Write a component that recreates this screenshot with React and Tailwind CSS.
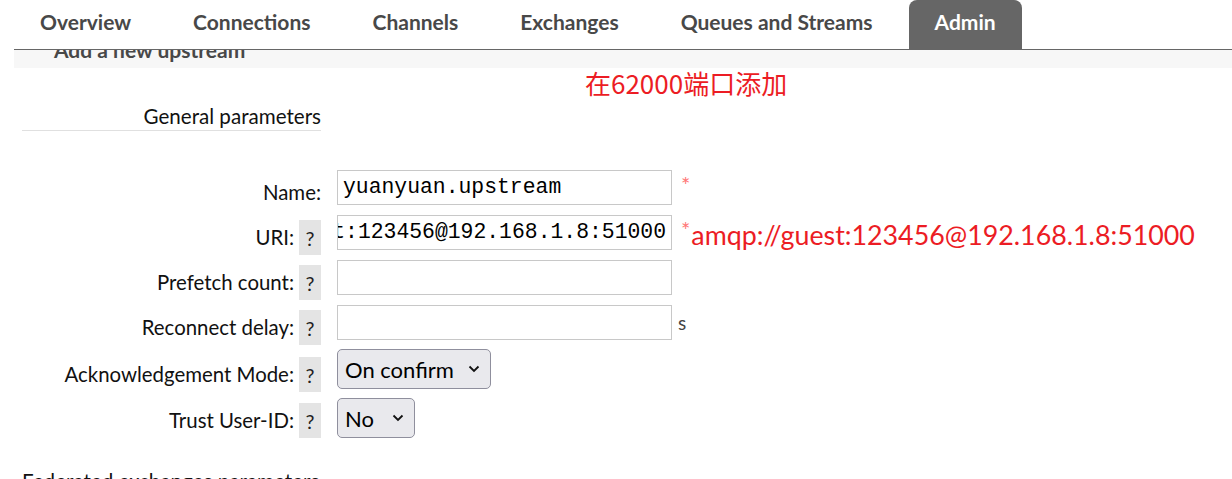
import React from 'react';

const tabs = ['Overview', 'Connections', 'Channels', 'Exchanges', 'Queues and Streams', 'Admin'];

const Help = () => (
  <span className="ml-[5px] flex h-[35px] w-[22px] items-center justify-center bg-[#e4e4e4] text-[20px] text-[#222]">?</span>
);

const Row = ({ label, help = true, offset = 'mt-[5px]', children, h = 'h-[45px]' }) => (
  <div className={`flex items-start ${h}`}>
    <div className={`flex w-[299px] items-center justify-end ${offset} h-[35px]`}>
      <span className="text-[20.4px] text-[#111]">{label}</span>
      {help && <Help />}
    </div>
    <div className="ml-4 flex items-start">{children}</div>
  </div>
);

const Input = ({ value = '', mono, alignEnd }) => (
  <div className={`flex h-[35px] w-[335px] items-center overflow-hidden border border-[#c8c8c8] bg-white px-[5px] text-[21.4px] text-black ${alignEnd ? 'justify-end' : ''} ${mono ? "font-['Liberation_Mono',monospace]" : ''}`}>
    <span className="whitespace-nowrap">{value}</span>
  </div>
);

const Select = ({ value, w }) => (
  <div className={`flex h-[40px] ${w} items-center justify-between rounded-[5px] border border-[#8f8f9d] bg-[#e9e9ed] pl-[7px] pr-[10px] text-[22px] text-black`}>
    <span>{value}</span>
    <svg width="12" height="8" viewBox="0 0 12 8" fill="none" stroke="#111" strokeWidth="1.8">
      <path d="M1.5 1.5 L6 6 L10.5 1.5" />
    </svg>
  </div>
);

const Star = () => (
  <span className="ml-[9px] mt-[4px] text-[22px] leading-[22px] text-[#f77]">*</span>
);

export default function App() {
  return (
    <div className="h-[479px] overflow-hidden bg-white font-['Lato','Noto_Sans',sans-serif]">
      {/* Tab bar */}
      <div className="ml-[14px] flex h-[50px] items-end gap-[10px] border-b border-[#666]">
        {tabs.map(t => (
          <div key={t}
            className={`flex h-[49px] items-center px-[26px] pb-[5px] text-[21px] font-bold ${t === 'Admin' ? 'rounded-t-[8px] bg-[#666] text-white' : 'text-[#484848]'}`}>
            {t}
          </div>
        ))}
      </div>

      {/* Clipped section heading */}
      <div className="ml-[14px] h-[18px] overflow-hidden bg-[#f7f7f7]">
        <div className="-mt-[16px] pl-[40px] text-[21px] font-bold text-[#484848]">Add a new upstream</div>
      </div>

      <div className="pl-[585px] font-['Noto_Sans_CJK_SC','Noto_Sans',sans-serif] text-[26px] leading-[30px] text-[#ec1c24]">在62000端口添加</div>

      <div className="ml-[22px] mt-[6px] w-[299px] border-b border-[#e0e0e0] pb-[1px] text-right text-[20.6px] leading-[25px] text-[#111]">
        General parameters
      </div>

      <div className="ml-[22px] mt-[39px]">
        <Row label="Name:" help={false}>
          <Input value="yuanyuan.upstream" mono />
          <Star />
        </Row>
        <Row label="URI:">
          <Input value="amqp://guest:123456@192.168.1.8:51000" mono alignEnd />
          <Star />
          <span className="ml-[1px] mt-[1px] text-[26.8px] leading-[38px] text-[#ec1c24]">amqp://guest:123456@192.168.1.8:51000</span>
        </Row>
        <Row label="Prefetch count:">
          <Input />
        </Row>
        <Row label="Reconnect delay:" h="h-[44px]">
          <Input />
          <span className="ml-[6px] mt-[4px] text-[19px] text-[#444]">s</span>
        </Row>
        <Row label="Acknowledgement Mode:" offset="mt-[8px]" h="h-[49px]">
          <Select value="On confirm" w="w-[154px]" />
        </Row>
        <Row label="Trust User-ID:" offset="mt-[5px]" h="h-[68px]">
          <Select value="No" w="w-[78px]" />
        </Row>
      </div>

      <div className="ml-[22px] text-[20.6px] text-[#111]">Federated exchanges parameters</div>
    </div>
  );
}
